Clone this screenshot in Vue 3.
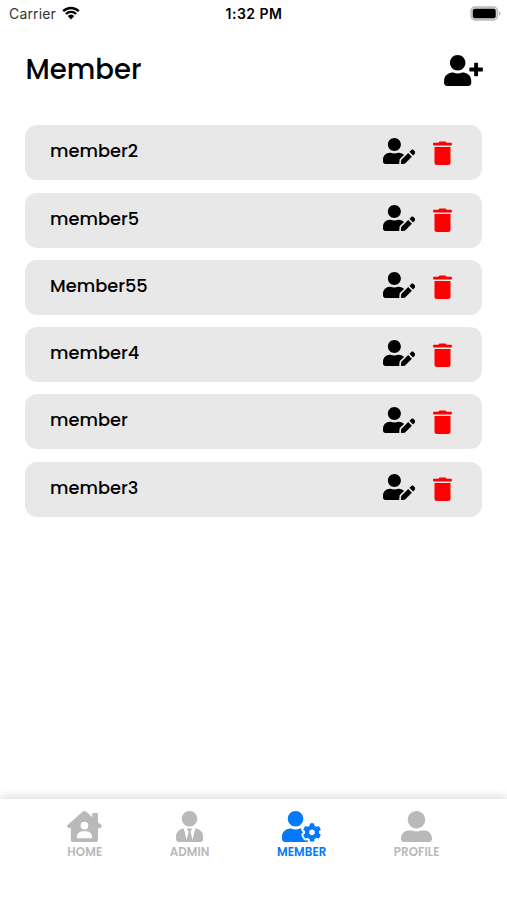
<template>
    <div class="screen">
        <!-- Status bar -->
        <div class="status">
            <div class="status__left">
                <span class="carrier">Carrier</span>
                <svg class="wifi" viewBox="0 0 18 14">
                    <path d="M1.2 5.1a11.2 11.2 0 0 1 15.6 0M3.9 8a7.3 7.3 0 0 1 10.2 0" />
                    <path class="wifi__dot" d="M5.7 9.9a4.9 4.9 0 0 1 6.6 0L9 13.5z" />
                </svg>
            </div>
            <span class="time">1:32 PM</span>
            <div class="status__right">
                <svg class="battery" viewBox="0 0 31 15">
                    <rect x="1" y="1" width="26.5" height="13" rx="4" fill="#d8d8d8" stroke="#b9b9b9" stroke-width="1.3" />
                    <rect x="2.8" y="2.8" width="22.9" height="9.4" rx="2" />
                    <path d="M29 5.2v4.6a2.5 2.5 0 0 0 0-4.6z" fill="#b9b9b9" />
                </svg>
            </div>
        </div>

        <header class="header">
            <h1>Member</h1>
            <svg class="add" viewBox="0 0 640 512">
                <path :d="icons.plus" />
                <path :d="icons.user" />
            </svg>
        </header>

        <ul class="members">
            <li v-for="member in members" :key="member" class="member">
                <span class="member__name">{{ member }}</span>
                <div class="member__actions">
                    <svg class="edit" viewBox="0 0 640 512"><path :d="icons.edit" /></svg>
                    <svg class="trash" viewBox="0 0 19 24">
                        <path d="M.8 1.8h4.4L6.6.5h5.8l1.4 1.3h4.4q.7 0 .7.7v1.2q0 .7-.7.7H.8q-.7 0-.7-.7V2.5q0-.7.7-.7zM1.5 5.9h16v15.6q0 2.5-2.5 2.5H4q-2.5 0-2.5-2.5z" />
                    </svg>
                </div>
            </li>
        </ul>

        <nav class="tabs">
            <div
                v-for="tab in tabs"
                :key="tab.label"
                class="tab"
                :class="{ active: tab.name === currentTab }"
                @click="currentTab = tab.name"
            >
                <svg :viewBox="`0 0 ${tab.width} 512`"><path :d="tab.icon" /></svg>
                <span>{{ tab.label }}</span>
            </div>
        </nav>
    </div>
</template>

<script setup>
    import { ref } from "vue";

    const members = ref(["member2", "member5", "Member55", "member4", "member", "member3"]);
    const currentTab = ref("manage");

    const head = "M224 256c70.7 0 128-57.3 128-128S294.7 0 224 0 96 57.3 96 128s57.3 128 128 128z";

    const icons = {
        user: head + "m89.6 32h-16.7c-22.2 10.2-46.9 16-72.9 16s-50.6-5.8-72.9-16h-16.7C60.2 288 0 348.2 0 422.4V464c0 26.5 21.5 48 48 48h352c26.5 0 48-21.5 48-48v-41.6c0-74.2-60.2-134.4-134.4-134.4z",
        plus: "M624 208h-64v-64c0-8.8-7.2-16-16-16h-32c-8.8 0-16 7.2-16 16v64h-64c-8.8 0-16 7.2-16 16v32c0 8.8 7.2 16 16 16h64v64c0 8.8 7.2 16 16 16h32c8.8 0 16-7.2 16-16v-64h64c8.8 0 16-7.2 16-16v-32c0-8.8-7.2-16-16-16z",
        edit: head + "m89.6 32h-16.7c-22.2 10.2-46.9 16-72.9 16s-50.6-5.8-72.9-16h-16.7C60.2 288 0 348.2 0 422.4V464c0 26.5 21.5 48 48 48h274.9c-2.4-6.8-3.4-14-2.6-21.3l6.8-60.9 1.2-11.1 7.9-7.9 77.3-77.3c-24.5-27.7-60-45.5-99.9-45.5zm45.3 145.3l-6.8 61c-1.1 10.2 7.5 18.8 17.6 17.6l60.9-6.8 137.9-137.9-71.7-71.7-137.9 137.8zM633 268.9L595.1 231c-9.3-9.3-24.5-9.3-33.8 0l-37.8 37.8-4.1 4.1 71.8 71.7 41.8-41.8c9.3-9.4 9.3-24.5 0-33.9z",
        home: "M570.69 236.27L512 184.44V48a16 16 0 0 0-16-16H432a16 16 0 0 0-16 16V99.67L314.78 10.3C308.5 4.61 296.53 0 288 0s-20.46 4.61-26.74 10.3l-256 226A18.27 18.27 0 0 0 0 248.2a18.64 18.64 0 0 0 4.09 10.71L25.5 282.7a21.14 21.14 0 0 0 12 5.3 21.67 21.67 0 0 0 10.69-4.11l15.9-14V480a32 32 0 0 0 32 32H480a32 32 0 0 0 32-32V269.88l15.91 14A21.94 21.94 0 0 0 538.63 288a20.89 20.89 0 0 0 11.87-5.31l21.41-23.81A21.64 21.64 0 0 0 576 248.19a21 21 0 0 0-5.31-11.92zM288 176a64 64 0 1 1-64 64A64 64 0 0 1 288 176zM400 448H176a16 16 0 0 1-16-16 96 96 0 0 1 96-96h64a96 96 0 0 1 96 96A16 16 0 0 1 400 448z",
        tie: head + "m95.8 32.6L272 480l-32-136 32-56h-96l32 56-32 136-47.8-191.4C56.9 292 0 350.3 0 422.4V464c0 26.5 21.5 48 48 48h352c26.5 0 48-21.5 48-48v-41.6c0-72.1-56.9-130.4-128.2-133.8z",
        cog: "M610.5 373.3c2.6-14.1 2.6-28.5 0-42.6l25.8-14.9c3-1.7 4.3-5.2 3.3-8.5-6.7-21.6-18.2-41.2-33.2-57.4-2.3-2.5-6-3.1-9-1.4l-25.8 14.9c-10.9-9.3-23.4-16.5-36.9-21.3v-29.8c0-3.4-2.4-6.4-5.7-7.1-22.3-5-45-4.8-66.2 0-3.3.7-5.7 3.7-5.7 7.1v29.8c-13.5 4.8-26 12-36.9 21.3l-25.8-14.9c-2.9-1.7-6.7-1.1-9 1.4-15 16.2-26.5 35.8-33.2 57.4-1 3.3.4 6.8 3.3 8.5l25.8 14.9c-2.6 14.1-2.6 28.5 0 42.6l-25.8 14.9c-3 1.7-4.3 5.2-3.3 8.5 6.7 21.6 18.2 41.1 33.2 57.4 2.3 2.5 6 3.1 9 1.4l25.8-14.9c10.9 9.3 23.4 16.5 36.9 21.3v29.8c0 3.4 2.4 6.4 5.7 7.1 22.3 5 45 4.8 66.2 0 3.3-.7 5.7-3.7 5.7-7.1v-29.8c13.5-4.8 26-12 36.9-21.3l25.8 14.9c2.9 1.7 6.7 1.1 9-1.4 15-16.2 26.5-35.8 33.2-57.4 1-3.3-.4-6.8-3.3-8.5l-25.8-14.9zM496 400.5c-26.8 0-48.5-21.8-48.5-48.5s21.8-48.5 48.5-48.5 48.5 21.8 48.5 48.5-21.7 48.5-48.5 48.5z" + head + "m201.2 226.5c-2.3-1.2-4.6-2.6-6.8-3.9l-7.9 4.6c-6 3.4-12.8 5.3-19.6 5.3-10.9 0-21.4-4.6-28.9-12.6-18.3-19.8-32.3-43.9-40.2-69.6-5.5-17.7 1.9-36.4 17.9-45.7l7.9-4.6c-.1-2.6-.1-5.2 0-7.8l-7.9-4.6c-16-9.2-23.4-28-17.9-45.7.9-2.9 2.2-5.8 3.2-8.7-3.8-.3-7.5-1.2-11.4-1.2h-16.7c-22.2 10.2-46.9 16-72.9 16s-50.6-5.8-72.9-16h-16.7C60.2 288 0 348.2 0 422.4V464c0 26.5 21.5 48 48 48h352c10.1 0 19.5-3.2 27.2-8.5-1.2-3.8-2-7.7-2-11.8v-9.2z",
        profile: "M256 288c79.5 0 144-64.5 144-144S335.5 0 256 0 112 64.5 112 144s64.5 144 144 144zm128 32h-55.1c-22.2 10.2-46.9 16-72.9 16s-50.6-5.8-72.9-16H128C57.3 320 0 377.3 0 448v16c0 26.5 21.5 48 48 48h416c26.5 0 48-21.5 48-48v-16c0-70.7-57.3-128-128-128z",
    };

    const tabs = [
        { name: "home", label: "HOME", icon: icons.home, width: 576 },
        { name: "admin", label: "ADMIN", icon: icons.tie, width: 448 },
        { name: "manage", label: "MEMBER", icon: icons.cog, width: 640 },
        { name: "profile", label: "PROFILE", icon: icons.profile, width: 512 },
    ];
</script>

<style>
    body {
        margin: 0;
        background: #fff;
    }
</style>

<style scoped>
    .screen {
        width: 507px;
        height: 900px;
        display: flex;
        flex-direction: column;
        overflow: hidden;
        background: #fff;
        color: #000;
        font-family: Poppins, Inter, sans-serif;
    }

    svg {
        display: block;
        flex: none;
        fill: currentColor;
    }

    /* status bar */
    .status {
        height: 28px;
        padding: 0 6px 0 9px;
        display: grid;
        grid-template-columns: 1fr auto 1fr;
        align-items: center;
        font-family: Inter, sans-serif;
        font-size: 14px;
        line-height: 28px;
    }

    .status__left {
        display: flex;
        align-items: center;
        gap: 6px;
    }

    .carrier {
        width: 47px;
        color: #333;
        letter-spacing: 0.15px;
    }

    .wifi {
        width: 18px;
        height: 14px;
        margin-top: -3px;
    }

    .wifi path {
        fill: none;
        stroke: #000;
        stroke-width: 2.4;
    }

    .wifi .wifi__dot {
        fill: #000;
        stroke: none;
    }

    .time {
        font-weight: 600;
        letter-spacing: 0.5px;
        margin-right: 2px;
    }

    .status__right {
        display: flex;
        justify-content: flex-end;
    }

    .battery {
        width: 31px;
        height: 15px;
        margin-top: -2px;
    }

    .header {
        height: 84px;
        padding: 0 24px 0 25.5px;
        display: flex;
        justify-content: space-between;
        align-items: center;
    }

    h1 {
        margin: 0;
        font-size: 27.5px;
        font-weight: 500;
    }

    .add {
        width: 39px;
        height: 31px;
    }

    .members {
        flex: 1;
        margin: 0;
        padding: 13.3px 25px 0;
        display: flex;
        flex-direction: column;
        gap: 12.3px;
        list-style: none;
    }

    .member {
        height: 55px;
        padding: 0 30px 0 25px;
        box-sizing: border-box;
        display: flex;
        justify-content: space-between;
        border-radius: 12px;
        background: #e8e8e8;
    }

    .member__name {
        line-height: 51px;
        font-size: 17.8px;
        font-weight: 500;
    }

    .member__actions {
        display: flex;
        align-items: flex-start;
        gap: 18px;
        padding-top: 12.5px;
    }

    .edit {
        width: 32.5px;
        height: 26px;
    }

    .trash {
        width: 19px;
        height: 24px;
        margin-top: 3px;
        color: #f00;
    }

    /* bottom tabs */
    .tabs {
        height: 101.5px;
        padding-top: 12.5px;
        box-sizing: border-box;
        display: flex;
        justify-content: space-evenly;
        background: #fff;
        box-shadow: 0 -4px 8px rgba(0, 0, 0, 0.11);
    }

    .tab {
        display: flex;
        flex-direction: column;
        align-items: center;
        cursor: pointer;
        color: #b9b9b9;
    }

    .tab svg {
        height: 31px;
    }

    .tab span {
        margin-top: 0.5px;
        font-size: 11.8px;
        line-height: 18px;
        font-weight: 600;
        letter-spacing: 0.1px;
    }

    .tab.active {
        color: #0479fb;
    }
</style>
